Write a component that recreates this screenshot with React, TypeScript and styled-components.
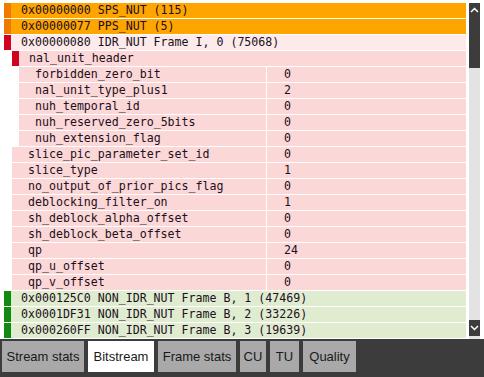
import React from 'react';
import styled, { createGlobalStyle } from 'styled-components';

type Kind = 'param' | 'slice' | 'nal' | 'field' | 'frame';

type Row = {
  label: string;
  kind: Kind;
  depth: number;
  value?: string;
};

const GlobalStyle = createGlobalStyle`
  html, body {
    margin: 0;
    padding: 0;
    background: #ffffff;
  }
  body {
    width: 484px;
    height: 377px;
    overflow: hidden;
  }
`;

const palette: Record<Kind, { bg: string; bar?: string }> = {
  param: { bg: '#ffa500', bar: '#ef7a00' },
  slice: { bg: '#fdeaea', bar: '#d20320' },
  nal: { bg: '#fbd7d7', bar: '#d20320' },
  field: { bg: '#fbd7d7' },
  frame: { bg: '#e0ecd0', bar: '#128a12' },
};

const indents = [0, 8, 15];

const rows: Row[] = [
  { label: '0x00000000 SPS_NUT (115)', kind: 'param', depth: 0 },
  { label: '0x00000077 PPS_NUT (5)', kind: 'param', depth: 0 },
  { label: '0x00000080 IDR_NUT Frame I, 0 (75068)', kind: 'slice', depth: 0 },
  { label: 'nal_unit_header', kind: 'nal', depth: 1 },
  { label: 'forbidden_zero_bit', kind: 'field', depth: 2, value: '0' },
  { label: 'nal_unit_type_plus1', kind: 'field', depth: 2, value: '2' },
  { label: 'nuh_temporal_id', kind: 'field', depth: 2, value: '0' },
  { label: 'nuh_reserved_zero_5bits', kind: 'field', depth: 2, value: '0' },
  { label: 'nuh_extension_flag', kind: 'field', depth: 2, value: '0' },
  { label: 'slice_pic_parameter_set_id', kind: 'field', depth: 1, value: '0' },
  { label: 'slice_type', kind: 'field', depth: 1, value: '1' },
  { label: 'no_output_of_prior_pics_flag', kind: 'field', depth: 1, value: '0' },
  { label: 'deblocking_filter_on', kind: 'field', depth: 1, value: '1' },
  { label: 'sh_deblock_alpha_offset', kind: 'field', depth: 1, value: '0' },
  { label: 'sh_deblock_beta_offset', kind: 'field', depth: 1, value: '0' },
  { label: 'qp', kind: 'field', depth: 1, value: '24' },
  { label: 'qp_u_offset', kind: 'field', depth: 1, value: '0' },
  { label: 'qp_v_offset', kind: 'field', depth: 1, value: '0' },
  { label: '0x000125C0 NON_IDR_NUT Frame B, 1 (47469)', kind: 'frame', depth: 0 },
  { label: '0x0001DF31 NON_IDR_NUT Frame B, 2 (33226)', kind: 'frame', depth: 0 },
  { label: '0x000260FF NON_IDR_NUT Frame B, 3 (19639)', kind: 'frame', depth: 0 },
];

const tabs = [
  { name: 'Stream stats', width: 82 },
  { name: 'Bitstream', width: 66 },
  { name: 'Frame stats', width: 78 },
  { name: 'CU', width: 26 },
  { name: 'TU', width: 29 },
  { name: 'Quality', width: 53 },
];

const Page = styled.div`
  display: flex;
  flex-direction: column;
  width: 484px;
  height: 377px;
`;

const Body = styled.div`
  display: flex;
  gap: 3px;
  padding: 3px 4px 0 4px;
  height: 336px;
`;

const List = styled.div`
  flex: 1;
  display: flex;
  flex-direction: column;
  overflow: hidden;
`;

const RowBox = styled.div<{ $indent: number; $bg: string }>`
  display: flex;
  height: 15px;
  margin-bottom: 1px;
  margin-left: ${(p) => p.$indent}px;
  background: ${(p) => p.$bg};
  font-family: "DejaVu Sans Mono", "Liberation Mono", monospace;
  font-size: 11.6px;
  line-height: 15px;
  color: #200f22;
  white-space: nowrap;
`;

const Bar = styled.div<{ $color: string }>`
  width: 7px;
  flex: none;
  background: ${(p) => p.$color};
`;

const Label = styled.div<{ $pad: number }>`
  flex: 1;
  padding-left: ${(p) => p.$pad}px;
  overflow: hidden;
`;

const Value = styled.div`
  width: 182px;
  flex: none;
  border-left: 1px solid #ffffff;
  padding-left: 17px;
`;

const Scrollbar = styled.div`
  width: 11px;
  display: flex;
  flex-direction: column;
  background: #e3e3e3;
  padding-bottom: 3px;
`;

const Thumb = styled.div`
  height: 65px;
  background: #3c3c3c;
  display: flex;
  justify-content: center;
  padding-top: 4px;
  box-sizing: border-box;
`;

const Track = styled.div`
  flex: 1;
`;

const ArrowBox = styled.div`
  height: 16px;
  background: #3c3c3c;
  display: flex;
  align-items: center;
  justify-content: center;
`;

const TabBar = styled.div`
  flex: 1;
  display: flex;
  gap: 4px;
  padding: 2px 0 0 2px;
  background: #3c3c3c;
`;

const Tab = styled.div<{ $active?: boolean; $width: number }>`
  width: ${(p) => p.$width}px;
  height: 31px;
  display: flex;
  align-items: center;
  justify-content: center;
  background: ${(p) => (p.$active ? '#ffffff' : '#a9a9a9')};
  color: #1a1a1a;
  font-family: "Liberation Sans", Arial, sans-serif;
  font-size: 13px;
  white-space: nowrap;
`;

const Chevron = ({ up }: { up?: boolean }) => (
  <svg width="9" height="6" viewBox="0 0 9 6">
    <path
      d={up ? 'M1 5 L4.5 1.5 L8 5' : 'M1 1 L4.5 4.5 L8 1'}
      fill="none"
      stroke="#ffffff"
      strokeWidth="1.5"
    />
  </svg>
);

const App = () => {
  return (
    <Page>
      <GlobalStyle />
      <Body>
        <List>
          {rows.map((row, i) => {
            const colors = palette[row.kind];
            return (
              <RowBox key={i} $indent={indents[row.depth]} $bg={colors.bg}>
                {colors.bar && <Bar $color={colors.bar} />}
                <Label $pad={colors.bar ? 10 : 16}>{row.label}</Label>
                {row.value !== undefined && <Value>{row.value}</Value>}
              </RowBox>
            );
          })}
        </List>
        <Scrollbar>
          <Thumb>
            <Chevron up />
          </Thumb>
          <Track />
          <ArrowBox>
            <Chevron />
          </ArrowBox>
        </Scrollbar>
      </Body>
      <TabBar>
        {tabs.map((t) => (
          <Tab key={t.name} $width={t.width} $active={t.name === 'Bitstream'}>
            {t.name}
          </Tab>
        ))}
      </TabBar>
    </Page>
  );
};

export default App;
